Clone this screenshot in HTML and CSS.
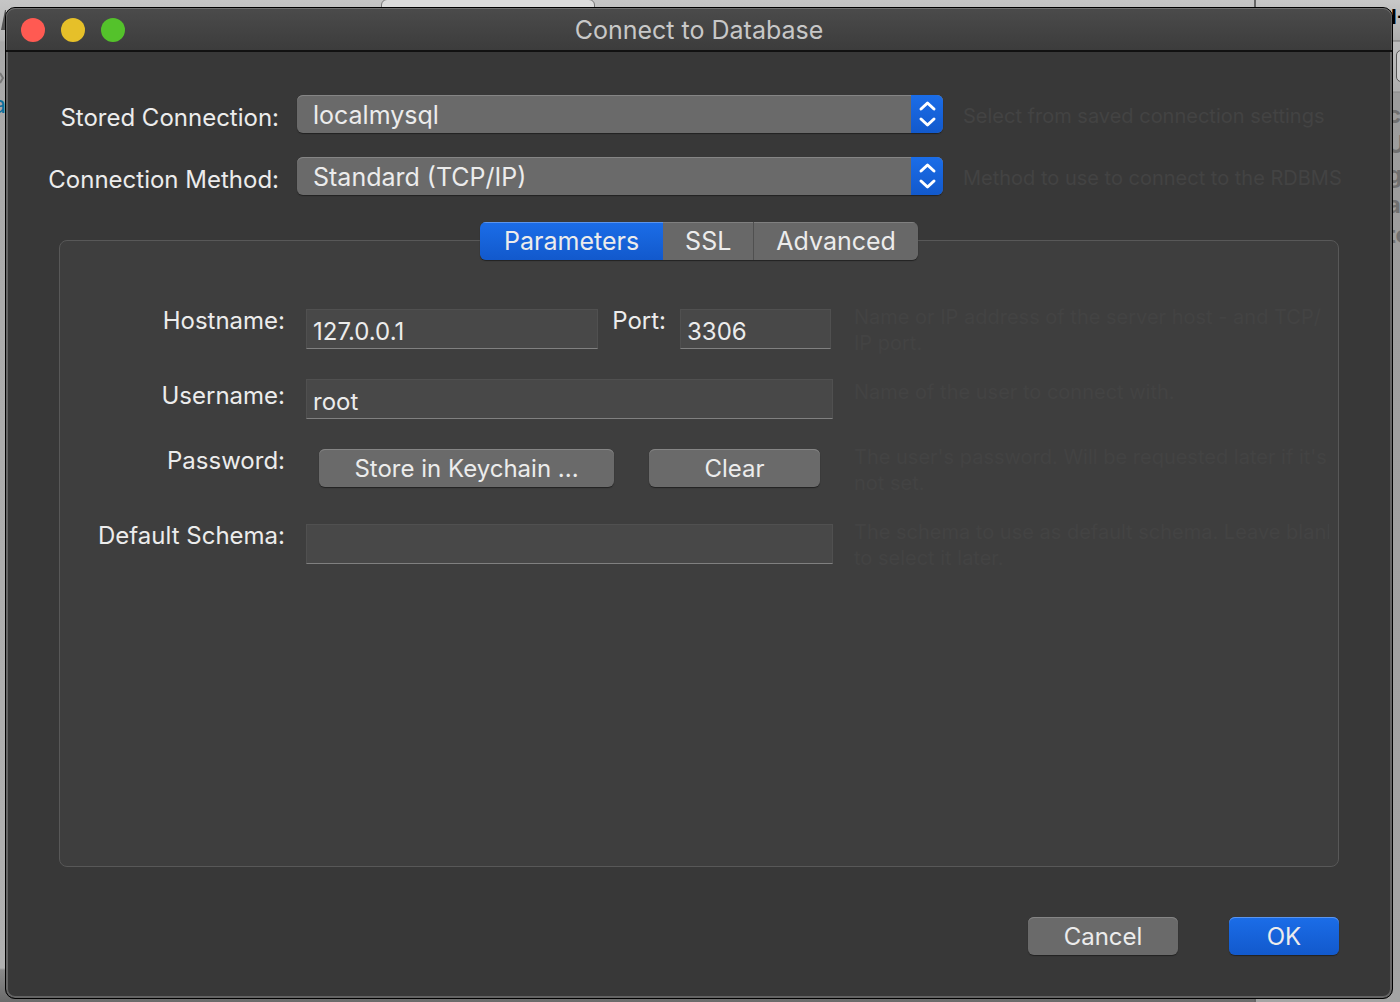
FILE: index.html
```html
<!DOCTYPE html>
<html lang="en">
<head>
<meta charset="utf-8">
<title>Connect to Database</title>
<link rel="stylesheet" href="styles.css">
</head>
<body>
<div class="backdrop" aria-hidden="true">
  <div class="back-tab"></div>
  <div class="back-left">
    <svg class="back-left-marks" width="6" height="100" viewBox="0 0 6 100"><path d="M1 30L5 10H6V30Z" fill="#555"/><path d="M0 73L3 78L0 83" fill="none" stroke="#777" stroke-width="2"/></svg>
    <span class="back-link">a</span>
  </div>
  <div class="back-right">
    <span class="back-heading">H-</span>
    <div class="back-field"></div>
    <div class="back-words"><span>c</span><span>U</span><span>g</span><span>a</span><span>te</span></div>
  </div>
</div>

<main class="window">
  <header class="titlebar">
    <div class="lights">
      <button class="light light-close" aria-label="Close"></button>
      <button class="light light-minimize" aria-label="Minimize"></button>
      <button class="light light-zoom" aria-label="Zoom"></button>
    </div>
    <h1 class="title">Connect to Database</h1>
  </header>

  <form class="content">
    <div class="connection">
      <label class="label" for="stored">Stored Connection:</label>
      <div class="popup">
        <select id="stored"><option>localmysql</option></select>
        <svg class="popup-arrows" viewBox="0 0 32 38"><path d="M10 14L16.500 8L23 14M10 24L16.500 30L23 24"/></svg>
      </div>
      <p class="hint hint-outer">Select from saved connection settings</p>

      <label class="label" for="method">Connection Method:</label>
      <div class="popup">
        <select id="method"><option>Standard (TCP/IP)</option></select>
        <svg class="popup-arrows" viewBox="0 0 32 38"><path d="M10 14L16.500 8L23 14M10 24L16.500 30L23 24"/></svg>
      </div>
      <p class="hint hint-outer">Method to use to connect to the RDBMS</p>
    </div>

    <div class="tabs" role="tablist">
      <button type="button" class="tab tab-active" role="tab" aria-selected="true">Parameters</button>
      <button type="button" class="tab" role="tab" aria-selected="false">SSL</button>
      <button type="button" class="tab" role="tab" aria-selected="false">Advanced</button>
    </div>

    <section class="panel">
      <div class="row">
        <label class="label" for="host">Hostname:</label>
        <div class="field field-split">
          <input class="input" id="host" type="text" value="127.0.0.1">
          <label class="label" for="port">Port:</label>
          <input class="input input-port" id="port" type="text" value="3306">
        </div>
        <p class="hint">Name or IP address of the server host - and TCP/<br>IP port.</p>
      </div>
      <div class="row row-single">
        <label class="label" for="user">Username:</label>
        <div class="field"><input class="input" id="user" type="text" value="root"></div>
        <p class="hint">Name of the user to connect with.</p>
      </div>
      <div class="row">
        <span class="label">Password:</span>
        <div class="field field-buttons">
          <button type="button" class="button button-store">Store in Keychain ...</button>
          <button type="button" class="button button-clear">Clear</button>
        </div>
        <p class="hint">The user's password. Will be requested later if it's<br>not set.</p>
      </div>
      <div class="row">
        <label class="label" for="schema">Default Schema:</label>
        <div class="field"><input class="input" id="schema" type="text"></div>
        <p class="hint">The schema to use as default schema. Leave blank<br>to select it later.</p>
      </div>
    </section>

    <footer class="actions">
      <button type="button" class="button button-cancel">Cancel</button>
      <button type="submit" class="button button-primary">OK</button>
    </footer>
  </form>
</main>
</body>
</html>
```
FILE: styles.css
```css
* { box-sizing: border-box; }

body {
  margin: 0;
  min-height: 100vh;
  display: flex;
  padding: 7px 7px 3px 5px;
  position: relative;
  overflow: hidden;
  background: #a9a9a9;
  color: #ececec;
  font: 24px/24px Inter, "Liberation Sans", sans-serif;
}

button, input, select { font: inherit; color: inherit; margin: 0; }
p, h1 { margin: 0; }

/* Desktop behind the dialog */
.backdrop {
  position: absolute;
  inset: 0;
  overflow: hidden;
  background: linear-gradient(#c6c6c6, #b4b4b4 40px, #a9a9a9 42px, #b0b0b0 968px, #8a8a8a 970px, #6b6b6b);
}
.back-tab {
  position: absolute;
  left: 381px;
  top: -1px;
  width: 214px;
  height: 20px;
  border: 1px solid #777;
  border-radius: 6px;
  background: #dcdcdc;
}
.back-left {
  position: absolute;
  left: 0;
  top: 0;
  width: 6px;
  height: 100%;
}
.back-left-marks { position: absolute; left: 0; top: 0; }
.back-link { position: absolute; right: 0; top: 93px; color: #0b6f9c; }
.back-right {
  position: absolute;
  right: 0;
  top: 0;
  width: 146px;
  height: 100%;
  border-left: 2px solid #666;
  background: linear-gradient(#c8c8c8, #adadad 40px, #777 41px, #bdbdbd 42px, #b0b0b0 91px, #888 92px, #9c9c9c 93px, #a4a4a4);
}
.back-heading { position: absolute; right: -6px; top: 5px; font-weight: 700; font-size: 20px; color: #000; }
.back-field {
  position: absolute;
  right: -20px;
  top: 50px;
  width: 24px;
  height: 32px;
  border: 1px solid #555;
  border-radius: 5px;
  background: #ccc;
}
.back-words {
  position: absolute;
  left: 131px;
  top: 100px;
  display: grid;
  grid-auto-rows: 30px;
  font-weight: 700;
  line-height: 30px;
  color: #707070;
}

/* Dialog */
.window {
  position: relative;
  flex: 1;
  display: flex;
  flex-direction: column;
  border: 1px solid #000;
  border-radius: 10px;
  background: #383838;
  box-shadow: inset 0 0 0 2px #646464;
  overflow: hidden;
}
.titlebar {
  display: grid;
  grid-template-columns: 1fr auto 1fr;
  align-items: center;
  height: 44px;
  padding: 2px 15px 0;
  border-bottom: 2px solid #111;
  border-radius: 9px 9px 0 0;
  background: linear-gradient(#4b4b4b, #3c3c3c);
  box-shadow: inset 0 1px #707070, inset 1px 0 #606060, inset -1px 0 #606060;
}
.lights { display: flex; gap: 16px; }
.light { width: 24px; height: 24px; padding: 0; border: 0; border-radius: 50%; }
.light-close { background: #ff5a52; }
.light-minimize { background: #e6c029; }
.light-zoom { background: #54c22b; }
.title { font-size: 25px; font-weight: 400; color: #c8c8c8; }

.content {
  flex: 1;
  display: flex;
  flex-direction: column;
  padding: 43px 53px 43px 53px;
}
.connection {
  display: grid;
  grid-template-columns: 220px 646px 1fr;
  column-gap: 18px;
  row-gap: 24px;
  margin: 0 -18px 27px 0;
}
.label { text-align: right; white-space: nowrap; }
.connection > .label { padding-top: 11px; margin-left: -20px; }

.popup { position: relative; height: 38px; }
.popup select {
  width: 100%;
  height: 38px;
  padding: 2px 48px 0 16px;
  border: 0;
  border-radius: 6px;
  appearance: none;
  font-size: 25px;
  line-height: 32px;
  background: #6a6a6a;
  box-shadow: inset 0 1px #858585, 0 1px 1px #222;
}
.popup-arrows {
  position: absolute;
  right: 0;
  top: 0;
  width: 32px;
  height: 38px;
  border-radius: 0 6px 6px 0;
  background: linear-gradient(#1b6de8, #1259cc);
  fill: none;
  stroke: #fff;
  stroke-width: 3;
  stroke-linecap: round;
  stroke-linejoin: round;
  pointer-events: none;
}

.hint {
  font-size: 20px;
  line-height: 26px;
  color: #434343;
  white-space: nowrap;
  overflow: hidden;
}
.hint-outer { padding: 8px 0 0 2px; }

.tabs {
  position: relative;
  align-self: center;
  display: flex;
  margin-bottom: -20px;
  border-radius: 6px;
  box-shadow: 0 1px 1px #222;
  overflow: hidden;
}
.tab {
  height: 38px;
  padding: 0 22px;
  border: 0;
  border-left: 1px solid #505050;
  font-size: 25px;
  background: #686868;
  box-shadow: inset 0 1px #808080;
}
.tab-active {
  padding: 0 24px;
  border-left: 0;
  background: linear-gradient(#1b6de8, #1259cc);
  box-shadow: inset 0 1px #5b95ee;
}
.tab-active + .tab { border-left: 0; }

.panel {
  flex: 1;
  display: flex;
  flex-direction: column;
  padding: 63px 9px 0 25px;
  border: 1px solid #585858;
  border-radius: 8px;
  background: #3e3e3e;
}
.row {
  display: grid;
  grid-template-columns: 200px 527px 1fr;
  column-gap: 21px;
  height: 75px;
}
.row-single { height: 65px; }
.row > .label { padding-top: 5px; }
.field { display: flex; align-items: flex-start; gap: 14px; padding-top: 5px; }
.row-single .field { padding-top: 0; }
.field-split { padding-right: 2px; }
.field-buttons { gap: 35px; padding: 5px 13px 0; }
.input {
  flex: 1;
  min-width: 0;
  height: 40px;
  padding: 5px 6px 0;
  border: 1px solid #505050;
  border-bottom-color: #808080;
  border-radius: 0;
  background: #484848;
}
.input-port { flex: 0 0 151px; }

.button {
  height: 38px;
  padding: 1px 0 0;
  border: 0;
  border-radius: 6px;
  background: #6a6a6a;
  box-shadow: inset 0 1px #858585, 0 1px 1px #222;
}
.button-store { flex: 295; }
.button-clear { flex: 171; }

.actions {
  display: flex;
  justify-content: flex-end;
  gap: 51px;
  padding-top: 50px;
}
.button-cancel { width: 150px; }
.button-primary {
  width: 110px;
  background: linear-gradient(#1b6de8, #1259cc);
  box-shadow: inset 0 1px #5b95ee, 0 1px 1px #222;
}
```
